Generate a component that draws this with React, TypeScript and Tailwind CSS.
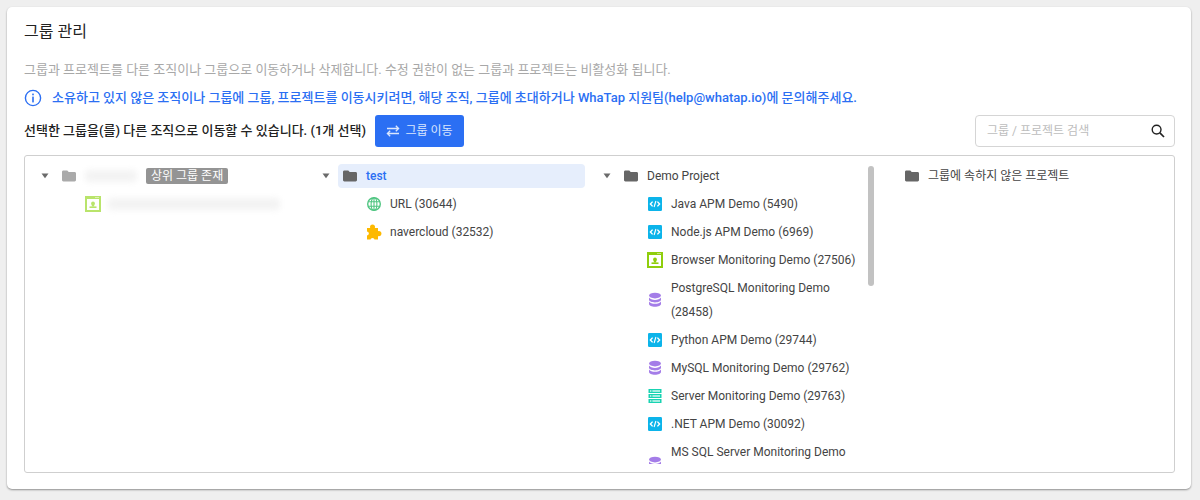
import React from "react";

const FONT = { fontFamily: '"Roboto","Noto Sans CJK KR",sans-serif' };

function Caret() {
  return (
    <svg width="8" height="6" viewBox="0 0 8 6" className="block">
      <path d="M0.5 0.5H7.5L4 5.2Z" fill="#6b6b6b" />
    </svg>
  );
}

function Folder({ light }: { light?: boolean }) {
  return (
    <svg width="16" height="16" viewBox="0 0 16 16" className="block shrink-0">
      <path
        d="M2.4 2.5H6.3L7.7 4H13.6C14.4 4 15 4.6 15 5.4V12.1C15 12.9 14.4 13.5 13.6 13.5H2.4C1.6 13.5 1 12.9 1 12.1V3.9C1 3.1 1.6 2.5 2.4 2.5Z"
        fill={light ? "#aaaaaa" : "#666666"}
      />
    </svg>
  );
}

function Code() {
  return (
    <svg width="16" height="16" viewBox="0 0 16 16" className="block shrink-0">
      <rect x="1" y="1" width="14" height="14" rx="1.2" fill="#0cb4ea" />
      <path d="M5.6 5.6L3.4 8L5.6 10.4M10.4 5.6L12.6 8L10.4 10.4" fill="none" stroke="#fff" strokeWidth="1.4" />
      <path d="M8.9 5L7.1 11" fill="none" stroke="#fff" strokeWidth="1.1" />
    </svg>
  );
}

function Browser({ light }: { light?: boolean }) {
  const c = light ? "#b9e46b" : "#8fce0c";
  return (
    <svg width="16" height="16" viewBox="0 0 16 16" className="block shrink-0">
      <rect x="0" y="0" width="16" height="16" fill={c} />
      <rect x="2" y="3" width="12" height="11" fill="#fff" />
      <rect x="10.5" y="1" width="1" height="1" fill="#fff" />
      <rect x="12.5" y="1" width="1" height="1" fill="#fff" />
      <circle cx="8" cy="7.4" r="1.9" fill={c} />
      <rect x="6.8" y="8.5" width="2.4" height="2" fill={c} />
      <rect x="4.5" y="10.4" width="7" height="1.6" fill={c} />
    </svg>
  );
}

function Db() {
  return (
    <svg width="16" height="16" viewBox="0 0 16 16" className="block shrink-0">
      <ellipse cx="8" cy="3.6" rx="6" ry="2.8" fill="#a47de8" />
      <path d="M2 5.6C3 7.4 5.4 7.9 8 7.9S13 7.4 14 5.6V7.8C14 9.3 11.3 10.4 8 10.4S2 9.3 2 7.8Z" fill="#a47de8" />
      <path d="M2 9.4C3 11.2 5.4 11.7 8 11.7S13 11.2 14 9.4V12C14 13.6 11.3 14.8 8 14.8S2 13.6 2 12Z" fill="#a47de8" />
    </svg>
  );
}

function Server() {
  const row = (y: number) => (
    <g key={y}>
      <rect x="1.5" y={y} width="13" height="4" fill="#19d3b2" />
      <rect x="3" y={y + 1.4} width="1.4" height="1.2" fill="#fff" />
      <rect x="5.4" y={y + 1.4} width="7.6" height="1.2" fill="#fff" />
    </g>
  );
  return (
    <svg width="16" height="16" viewBox="0 0 16 16" className="block shrink-0">
      {row(1)}
      {row(6)}
      {row(11)}
    </svg>
  );
}

function Globe() {
  return (
    <svg width="16" height="16" viewBox="0 0 16 16" className="block shrink-0" fill="none" stroke="#4fc581" strokeWidth="1.1">
      <circle cx="8" cy="8" r="6.3" strokeWidth="1.4" />
      <ellipse cx="8" cy="8" rx="2.9" ry="6.3" />
      <path d="M2.2 5.7H13.8M2.2 10.3H13.8M8 1.7V14.3" />
    </svg>
  );
}

function Puzzle() {
  return (
    <svg width="16" height="16" viewBox="0 0 16 16" className="block shrink-0">
      <rect x="1" y="4" width="11" height="11.5" fill="#fdb900" />
      <circle cx="6.5" cy="3" r="2.5" fill="#fdb900" />
      <circle cx="12.8" cy="9.6" r="2.6" fill="#fdb900" />
      <circle cx="0.8" cy="9.6" r="2" fill="#fff" />
      <circle cx="6.5" cy="16" r="2" fill="#fff" />
    </svg>
  );
}

function Swap() {
  return (
    <svg width="14" height="12" viewBox="0 0 14 12" fill="none" stroke="#dbe7fd" strokeWidth="1.3" className="block">
      <path d="M1 3.5H12.5M9.8 0.8L12.6 3.5L9.8 6.2" />
      <path d="M13 8.5H1.5M4.2 5.8L1.4 8.5L4.2 11.2" />
    </svg>
  );
}

function Search() {
  return (
    <svg width="16" height="16" viewBox="0 0 16 16" fill="none" stroke="#222" strokeWidth="1.4" className="block">
      <circle cx="6.6" cy="6.6" r="4.4" />
      <path d="M9.9 9.9L14 14" strokeWidth="1.7" />
    </svg>
  );
}

function Info() {
  return (
    <svg width="18" height="18" viewBox="0 0 18 18" fill="none" className="block">
      <circle cx="9" cy="9" r="7.6" stroke="#2b6ff3" strokeWidth="1.4" />
      <rect x="8.2" y="4.6" width="1.6" height="1.7" fill="#2b6ff3" />
      <rect x="8.2" y="7.6" width="1.6" height="5.8" fill="#2b6ff3" />
    </svg>
  );
}

type Item = { icon: React.ReactNode; label: React.ReactNode };

function ItemRow({ icon, label }: Item) {
  return (
    <div className="flex min-h-7 items-center gap-2 py-0.5 pl-7 pr-2">
      {icon}
      <span className="leading-6 text-[#444444]">{label}</span>
    </div>
  );
}

const demoItems: (Item & { id: string })[] = [
  { id: "java", icon: <Code />, label: "Java APM Demo (5490)" },
  { id: "node", icon: <Code />, label: "Node.js APM Demo (6969)" },
  { id: "browser", icon: <Browser />, label: "Browser Monitoring Demo (27506)" },
  { id: "pg", icon: <Db />, label: "PostgreSQL Monitoring Demo (28458)" },
  { id: "py", icon: <Code />, label: "Python APM Demo (29744)" },
  { id: "my", icon: <Db />, label: "MySQL Monitoring Demo (29762)" },
  { id: "server", icon: <Server />, label: "Server Monitoring Demo (29763)" },
  { id: "net", icon: <Code />, label: ".NET APM Demo (30092)" },
  {
    id: "ms",
    icon: <Db />,
    label: (
      <>
        MS SQL Server Monitoring Demo
        <br />
        &nbsp;
      </>
    ),
  },
];

function Column({ head, children, noCaret }: { head: React.ReactNode; children?: React.ReactNode; noCaret?: boolean }) {
  return (
    <div className="w-[281px] shrink-0 pl-8">
      <div className="relative">
        {!noCaret && (
          <div className="absolute -left-[16px] top-[9px]">
            <Caret />
          </div>
        )}
        {head}
      </div>
      <div className="mt-0.5">{children}</div>
    </div>
  );
}

export default function App() {
  return (
    <div className="h-[500px] w-[1200px] bg-[#efefef] p-[7px]" style={FONT}>
      <div className="flex h-[482px] w-[1184px] flex-col rounded-[5px] bg-white pl-[17px] pr-[16px] pt-[14px] shadow-[0_1px_2px_rgba(0,0,0,0.4)]">
        <h1 className="text-[16px] leading-[22px] font-normal text-[#222222]">그룹 관리</h1>
        <p className="mt-[16px] text-[13px] leading-[22px] text-[#a8a8a8]">
          그룹과 프로젝트를 다른 조직이나 그룹으로 이동하거나 삭제합니다. 수정 권한이 없는 그룹과 프로젝트는 비활성화 됩니다.
        </p>
        <div className="mt-[6px] flex items-center gap-[10px] text-[13px] leading-[22px] font-medium text-[#2b6ff3]">
          <Info />
          <span>
            소유하고 있지 않은 조직이나 그룹에 그룹, 프로젝트를 이동시키려면, 해당 조직, 그룹에 초대하거나 WhaTap 지원팀(help@whatap.io)에 문의해주세요.
          </span>
        </div>
        <div className="mt-[6px] flex h-8 items-center">
          <span className="text-[13px] font-medium text-[#222222]">선택한 그룹을(를) 다른 조직으로 이동할 수 있습니다. (1개 선택)</span>
          <button className="ml-[9px] flex h-8 w-[89px] items-center justify-center gap-[5px] rounded-[3px] bg-[#2b6ff3] text-[12px] text-[#dbe7fd]">
            <Swap />
            그룹 이동
          </button>
          <div className="ml-auto flex h-8 w-[200px] items-center justify-between rounded-[4px] border border-[#d5d5d5] pl-[11px] pr-[8px] text-[12px] text-[#bdbdbd]">
            <span>그룹 / 프로젝트 검색</span>
            <Search />
          </div>
        </div>
        <div className="relative mt-2 h-[318px] w-[1151px] rounded-[3px] border border-[#cfcfcf] py-2 text-[12px]">
          <div className="flex h-[300px] overflow-hidden">
            <Column
              head={
                <div className="flex h-6 items-center gap-2 pl-1">
                  <Folder light />
                  <span className="h-3 w-[52px] rounded-sm bg-[#f3f3f3] blur-[3px]" />
                  <span className="ml-px flex h-4 items-center rounded-[2px] bg-[#949494] px-[5px] text-[12px] leading-4 text-white">상위 그룹 존재</span>
                </div>
              }
            >
              <div className="flex min-h-7 items-center gap-[7px] pl-7">
                <Browser light />
                <span className="h-3 w-[172px] rounded-sm bg-[#f3f3f3] blur-[3px]" />
              </div>
            </Column>
            <Column
              head={
                <div className="flex h-6 w-[247px] items-center gap-2 rounded-[4px] bg-[#e6eefc] pl-1">
                  <Folder />
                  <span className="font-medium text-[#2b6ff3]">test</span>
                </div>
              }
            >
              <ItemRow icon={<Globe />} label="URL (30644)" />
              <ItemRow icon={<Puzzle />} label="navercloud (32532)" />
            </Column>
            <Column
              head={
                <div className="flex h-6 items-center gap-2 pl-1 text-[#444444]">
                  <Folder />
                  <span>Demo Project</span>
                </div>
              }
            >
              {demoItems.map((it) => (
                <ItemRow key={it.id} icon={it.icon} label={it.label} />
              ))}
            </Column>
            <Column
              noCaret
              head={
                <div className="flex h-6 items-center gap-2 pl-1 text-[#444444]">
                  <Folder />
                  <span>그룹에 속하지 않은 프로젝트</span>
                </div>
              }
            />
          </div>
          <div className="absolute left-[843px] top-[10px] h-[120px] w-[6px] rounded-[3px] bg-[#c2c2c2]" />
        </div>
      </div>
    </div>
  );
}
